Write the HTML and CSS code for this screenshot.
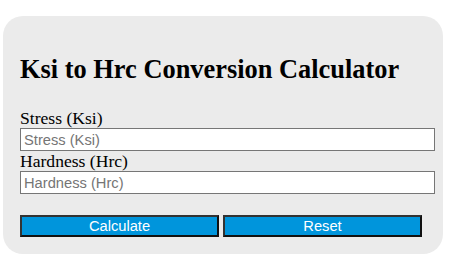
FILE: index.html
```html
<!DOCTYPE html>
<html lang="en">
<head>
  <meta charset="UTF-8" />
  <title>Ksi to Hrc Conversion Calculator</title>
  <link rel="stylesheet" href="styles.css">
</head>
<body>

  <div class="calculator">
    <h2>Ksi to Hrc Conversion Calculator</h2>

    <label for="stress">Stress (Ksi)</label>
    <input type="number" id="stress" placeholder="Stress (Ksi)">

    <label for="hardness">Hardness (Hrc)</label>
    <input type="number" id="hardness" placeholder="Hardness (Hrc)">

    <div class="buttons">
      <button id="calcBtn">Calculate</button>
      <button id="resetBtn">Reset</button>
    </div>
  </div>

</body>
</html>
```

FILE: styles.css
```css
body {
  margin: 0;
  font-family: "Liberation Serif", serif;
  background: #fff;
}

.calculator {
  width: 406px;
  margin: 16px 0 0 3px;
  padding: 18px 17px 17px 17px;
  background-color: #ebebeb;
  border-radius: 20px;
}

.calculator h2 {
  font-size: 26.4px;
  font-weight: bold;
  margin: 20px 0 23px 0;
}

.calculator label {
  display: block;
  font-size: 17.6px;
  line-height: 20px;
}

.calculator input {
  display: block;
  box-sizing: border-box;
  width: 415px;
  height: 23px;
  margin: 0;
  padding: 1px 3px;
  border: 1px solid #767676;
  font-family: "Liberation Sans", Arial, sans-serif;
  font-size: 14.7px;
  background: #fff;
}

.calculator input::placeholder {
  color: #757575;
}

.buttons {
  display: flex;
  gap: 4px;
  margin-top: 21px;
}

.buttons button {
  box-sizing: border-box;
  width: 199px;
  height: 22px;
  padding: 0;
  background-color: #0095dc;
  color: #fff;
  font-family: "Liberation Sans", Arial, sans-serif;
  font-size: 14.7px;
  border: 2px solid #111;
  border-top-color: #333;
  border-left-color: #333;
  cursor: pointer;
}
```
